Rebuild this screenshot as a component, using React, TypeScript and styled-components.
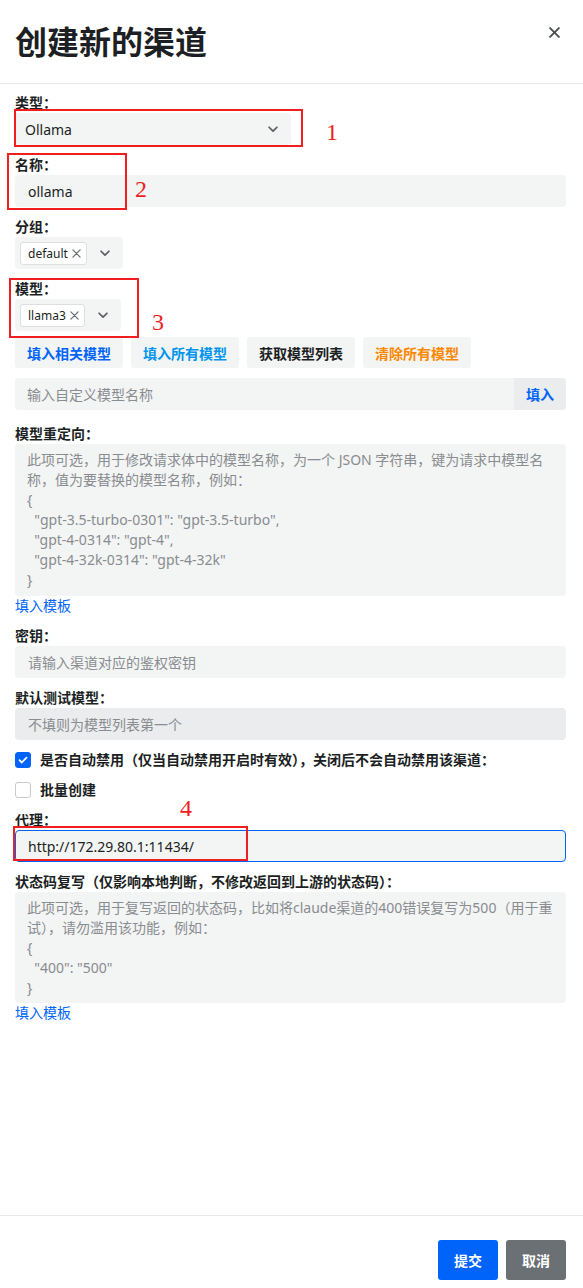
import React from "react";
import styled, { createGlobalStyle } from "styled-components";

const GlobalStyle = createGlobalStyle`
  html, body {
    margin: 0;
    padding: 0;
    background: #fff;
  }
  body {
    font-family: "Noto Sans", "Noto Sans CJK SC", sans-serif;
    color: #1c1f23;
  }
  * {
    box-sizing: border-box;
  }
`;

const ChevronDown = () => (
  <svg width="14" height="14" viewBox="0 0 16 16" fill="none">
    <path
      d="M3.5 6l4.5 4.5L12.5 6"
      stroke="#5c5f63"
      strokeWidth="2"
      strokeLinecap="round"
      strokeLinejoin="round"
    />
  </svg>
);

const CrossIcon = ({
  size = 9,
  color = "#6b6e72",
  weight = 1.4,
}: {
  size?: number;
  color?: string;
  weight?: number;
}) => (
  <svg width={size} height={size} viewBox="0 0 10 10" fill="none">
    <path d="M1 1l8 8M9 1L1 9" stroke={color} strokeWidth={weight} strokeLinecap="round" />
  </svg>
);

const CheckIcon = () => (
  <svg width="10" height="10" viewBox="0 0 10 10" fill="none">
    <path
      d="M1.5 5.2l2.3 2.3L8.5 2.6"
      stroke="#fff"
      strokeWidth="1.8"
      strokeLinecap="round"
      strokeLinejoin="round"
    />
  </svg>
);

export default function App() {
  return (
    <Page>
      <GlobalStyle />
      <Header>
        <Title>创建新的渠道</Title>
        <CloseButton aria-label="关闭">
          <CrossIcon size={11} color="#4a4d51" weight={1.7} />
        </CloseButton>
      </Header>

      <Body>
        <Field>
          <Label>类型：</Label>
          <Select $width={276}>
            <span>Ollama</span>
            <ArrowBox>
              <ChevronDown />
            </ArrowBox>
          </Select>
        </Field>

        <Field>
          <Label>名称：</Label>
          <Input defaultValue="ollama" />
        </Field>

        <Field>
          <Label>分组：</Label>
          <MultiSelect>
            <Tag>
              default
              <CrossIcon />
            </Tag>
            <ArrowBox>
              <ChevronDown />
            </ArrowBox>
          </MultiSelect>
        </Field>

        <Field>
          <Label>模型：</Label>
          <MultiSelect>
            <Tag>
              llama3
              <CrossIcon />
            </Tag>
            <ArrowBox>
              <ChevronDown />
            </ArrowBox>
          </MultiSelect>
        </Field>

        <ButtonRow>
          <LightButton $color="#0064fa">填入相关模型</LightButton>
          <LightButton $color="#0095ee">填入所有模型</LightButton>
          <LightButton $color="#1c1f23">获取模型列表</LightButton>
          <LightButton $color="#fc8800">清除所有模型</LightButton>
        </ButtonRow>

        <InputGroup>
          <GroupInput placeholder="输入自定义模型名称" />
          <SuffixButton>填入</SuffixButton>
        </InputGroup>

        <Field $gap={14}>
          <Label>模型重定向：</Label>
          <TextArea
            $height={152}
            placeholder={`此项可选，用于修改请求体中的模型名称，为一个 JSON 字符串，键为请求中模型名称，值为要替换的模型名称，例如：
{
  "gpt-3.5-turbo-0301": "gpt-3.5-turbo",
  "gpt-4-0314": "gpt-4",
  "gpt-4-32k-0314": "gpt-4-32k"
}`}
          />
          <LinkText>填入模板</LinkText>
        </Field>

        <Field>
          <Label>密钥：</Label>
          <Input placeholder="请输入渠道对应的鉴权密钥" />
        </Field>

        <Field>
          <Label>默认测试模型：</Label>
          <Input $disabled placeholder="不填则为模型列表第一个" />
        </Field>

        <CheckRow>
          <CheckBox $checked>
            <CheckIcon />
          </CheckBox>
          <CheckLabel>是否自动禁用（仅当自动禁用开启时有效），关闭后不会自动禁用该渠道：</CheckLabel>
        </CheckRow>

        <CheckRow>
          <CheckBox />
          <CheckLabel>批量创建</CheckLabel>
        </CheckRow>

        <Field>
          <Label>代理：</Label>
          <Input $focused defaultValue="http://172.29.80.1:11434/" />
        </Field>

        <Field>
          <Label>状态码复写（仅影响本地判断，不修改返回到上游的状态码）：</Label>
          <TextArea
            $height={111}
            placeholder={`此项可选，用于复写返回的状态码，比如将claude渠道的400错误复写为500（用于重试），请勿滥用该功能，例如：
{
  "400": "500"
}`}
          />
          <LinkText>填入模板</LinkText>
        </Field>
      </Body>

      <Footer>
        <SolidButton $bg="#0064fa">提交</SolidButton>
        <SolidButton $bg="#6b7075">取消</SolidButton>
      </Footer>

      {/* red markup drawn over the screenshot */}
      <MarkBox $x={14} $y={109} $w={289} $h={38} />
      <MarkNumber $x={326} $y={118}>1</MarkNumber>
      <MarkBox $x={7} $y={153} $w={120} $h={57} />
      <MarkNumber $x={135} $y={175}>2</MarkNumber>
      <MarkBox $x={9} $y={278} $w={130} $h={60} />
      <MarkNumber $x={152} $y={308}>3</MarkNumber>
      <MarkBox $x={13} $y={826} $w={235} $h={35} />
      <MarkNumber $x={180} $y={794}>4</MarkNumber>
    </Page>
  );
}

const Page = styled.div`
  position: relative;
  display: flex;
  flex-direction: column;
  width: 583px;
  min-height: 1288px;
  background: #fff;
`;

const Header = styled.div`
  display: flex;
  justify-content: space-between;
  align-items: flex-start;
  height: 84px;
  padding: 20px 22px 0 15px;
  border-bottom: 1px solid #e8e9ea;
`;

const Title = styled.h1`
  margin: 0;
  font-size: 32px;
  line-height: 44px;
  font-weight: 700;
  color: #1c1f23;
`;

const CloseButton = styled.button`
  display: flex;
  align-items: center;
  justify-content: center;
  width: 14px;
  height: 14px;
  margin-top: 5px;
  padding: 0;
  border: none;
  background: none;
  cursor: pointer;
`;

const Body = styled.div`
  flex: 1;
  display: flex;
  flex-direction: column;
  padding: 9px 17px 0 15px;
`;

const Field = styled.div<{ $gap?: number }>`
  display: flex;
  flex-direction: column;
  margin-top: ${(p) => p.$gap ?? 10}px;

  &:first-child {
    margin-top: 0;
  }
`;

const Label = styled.label`
  font-size: 14px;
  line-height: 20px;
  font-weight: 700;
  color: #1c1f23;
`;

const Input = styled.input<{ $disabled?: boolean; $focused?: boolean }>`
  width: 100%;
  height: 32px;
  padding: 0 12px;
  border: 1px solid ${(p) => (p.$focused ? "#0064fa" : "transparent")};
  border-radius: 4px;
  background: ${(p) => (p.$disabled ? "#ebeced" : "#f3f4f4")};
  font-family: inherit;
  font-size: 14px;
  color: #1c1f23;
  outline: none;

  &::placeholder {
    color: #898c90;
  }
`;

const Select = styled.div<{ $width: number }>`
  display: flex;
  align-items: center;
  justify-content: space-between;
  width: ${(p) => p.$width}px;
  height: 32px;
  padding-left: 10px;
  border-radius: 4px;
  background: #f3f4f4;
  font-size: 14px;
  color: #1c1f23;
`;

const ArrowBox = styled.span`
  display: flex;
  align-items: center;
  justify-content: center;
  width: 36px;
  height: 100%;
`;

const MultiSelect = styled.div`
  display: inline-flex;
  align-self: flex-start;
  align-items: center;
  height: 32px;
  padding-left: 5px;
  border-radius: 4px;
  background: #f3f4f4;
`;

const Tag = styled.span`
  display: inline-flex;
  align-items: center;
  gap: 4px;
  height: 23px;
  padding: 0 5px 0 7px;
  border: 1px solid #dcdee0;
  border-radius: 3px;
  background: #fff;
  font-size: 12px;
  color: #1c1f23;
`;

const ButtonRow = styled.div`
  display: flex;
  gap: 8px;
  margin-top: 6px;
`;

const LightButton = styled.button<{ $color: string }>`
  height: 31px;
  padding: 0 12px;
  border: none;
  border-radius: 3px;
  background: #f3f4f4;
  font-family: inherit;
  font-size: 14px;
  font-weight: 700;
  color: ${(p) => p.$color};
  cursor: pointer;
`;

const InputGroup = styled.div`
  display: flex;
  height: 32px;
  margin-top: 10px;
  border-radius: 4px;
  overflow: hidden;
  background: #f3f4f4;
`;

const GroupInput = styled.input`
  flex: 1;
  min-width: 0;
  padding: 0 12px;
  border: none;
  background: transparent;
  font-family: inherit;
  font-size: 14px;
  outline: none;

  &::placeholder {
    color: #898c90;
  }
`;

const SuffixButton = styled.button`
  width: 52px;
  border: none;
  background: #ebeced;
  font-family: inherit;
  font-size: 14px;
  font-weight: 700;
  color: #0064fa;
  cursor: pointer;
`;

const TextArea = styled.textarea<{ $height: number }>`
  width: 100%;
  height: ${(p) => p.$height}px;
  padding: 6px 12px;
  border: none;
  border-radius: 4px;
  background: #f3f4f4;
  font-family: inherit;
  font-size: 14px;
  line-height: 20px;
  color: #1c1f23;
  resize: none;
  outline: none;

  &::placeholder {
    color: #898c90;
  }
`;

const LinkText = styled.a`
  align-self: flex-start;
  font-size: 14px;
  line-height: 20px;
  color: #0064fa;
  cursor: pointer;
`;

const CheckRow = styled.div`
  display: flex;
  align-items: center;
  gap: 9px;
  height: 20px;
  margin-top: 10px;
`;

const CheckBox = styled.span<{ $checked?: boolean }>`
  display: flex;
  align-items: center;
  justify-content: center;
  width: 16px;
  height: 16px;
  border-radius: 3px;
  border: 1px solid ${(p) => (p.$checked ? "#0064fa" : "#c6cacd")};
  background: ${(p) => (p.$checked ? "#0064fa" : "#fff")};
`;

const CheckLabel = styled.span`
  font-size: 14px;
  line-height: 20px;
  font-weight: 700;
  color: #1c1f23;
`;

const Footer = styled.div`
  display: flex;
  justify-content: flex-end;
  gap: 8px;
  height: 73px;
  padding: 24px 17px 0 15px;
  border-top: 1px solid #e8e9ea;
`;

const SolidButton = styled.button<{ $bg: string }>`
  width: 60px;
  height: 40px;
  border: none;
  border-radius: 3px;
  background: ${(p) => p.$bg};
  font-family: inherit;
  font-size: 14px;
  font-weight: 700;
  color: #fff;
  cursor: pointer;
`;

const MarkBox = styled.div<{ $x: number; $y: number; $w: number; $h: number }>`
  position: absolute;
  left: ${(p) => p.$x}px;
  top: ${(p) => p.$y}px;
  width: ${(p) => p.$w}px;
  height: ${(p) => p.$h}px;
  border: 2px solid #f01e1e;
  pointer-events: none;
`;

const MarkNumber = styled.span<{ $x: number; $y: number }>`
  position: absolute;
  left: ${(p) => p.$x}px;
  top: ${(p) => p.$y}px;
  font-family: "Liberation Serif", serif;
  font-size: 24px;
  line-height: 28px;
  color: #f01e1e;
  pointer-events: none;
`;
